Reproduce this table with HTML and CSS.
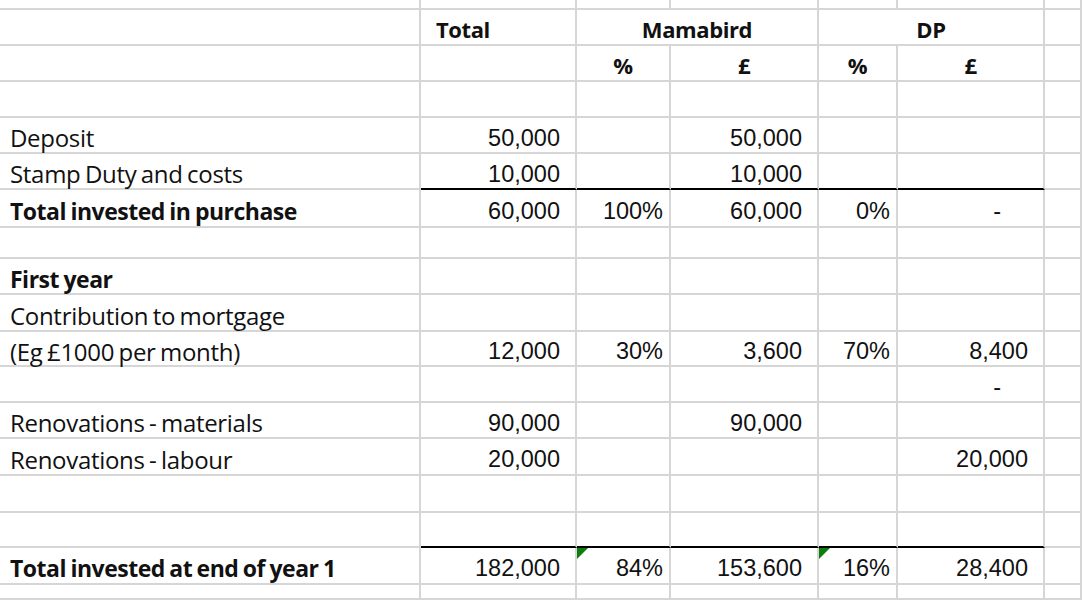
FILE: index.html
```html
<!DOCTYPE html>
<html lang="en">
<head>
<meta charset="utf-8">
<title>Investment split</title>
<link rel="stylesheet" href="styles.css">
</head>
<body>
<div class="sheet">
  <div class="row h10"><div class="c"></div><div class="c"></div><div class="c"></div><div class="c"></div><div class="c"></div><div class="c"></div><div class="c"></div></div>
  <div class="row h36">
    <div class="c"></div>
    <div class="c hd left">Total</div>
    <div class="c hd ctr span2">Mamabird</div>
    <div class="c hd ctr span2">DP</div>
    <div class="c"></div>
  </div>
  <div class="row h36">
    <div class="c"></div><div class="c"></div>
    <div class="c hd ctr">%</div><div class="c hd ctr">£</div>
    <div class="c hd ctr">%</div><div class="c hd ctr">£</div>
    <div class="c"></div>
  </div>
  <div class="row h36"><div class="c"></div><div class="c"></div><div class="c"></div><div class="c"></div><div class="c"></div><div class="c"></div><div class="c"></div></div>
  <div class="row h36">
    <div class="c lbl">Deposit</div>
    <div class="c num">50,000</div><div class="c"></div><div class="c num">50,000</div><div class="c"></div><div class="c"></div>
    <div class="c"></div>
  </div>
  <div class="row h36">
    <div class="c lbl">Stamp Duty and costs</div>
    <div class="c num ul">10,000</div><div class="c ul"></div><div class="c num ul">10,000</div><div class="c ul"></div><div class="c ul"></div>
    <div class="c"></div>
  </div>
  <div class="row h38">
    <div class="c lbl b">Total invested in purchase</div>
    <div class="c num">60,000</div><div class="c pct">100%</div><div class="c num">60,000</div><div class="c pct">0%</div><div class="c num dash">-</div>
    <div class="c"></div>
  </div>
  <div class="row h31"><div class="c"></div><div class="c"></div><div class="c"></div><div class="c"></div><div class="c"></div><div class="c"></div><div class="c"></div></div>
  <div class="row h36">
    <div class="c lbl b">First year</div>
    <div class="c"></div><div class="c"></div><div class="c"></div><div class="c"></div><div class="c"></div><div class="c"></div>
  </div>
  <div class="row h37">
    <div class="c lbl">Contribution to mortgage</div>
    <div class="c"></div><div class="c"></div><div class="c"></div><div class="c"></div><div class="c"></div><div class="c"></div>
  </div>
  <div class="row h35">
    <div class="c lbl">(Eg £1000 per month)</div>
    <div class="c num">12,000</div><div class="c pct">30%</div><div class="c num">3,600</div><div class="c pct">70%</div><div class="c num">8,400</div>
    <div class="c"></div>
  </div>
  <div class="row h36">
    <div class="c"></div><div class="c"></div><div class="c"></div><div class="c"></div><div class="c"></div><div class="c num dash">-</div>
    <div class="c"></div>
  </div>
  <div class="row h36">
    <div class="c lbl">Renovations - materials</div>
    <div class="c num">90,000</div><div class="c"></div><div class="c num">90,000</div><div class="c"></div><div class="c"></div>
    <div class="c"></div>
  </div>
  <div class="row h37">
    <div class="c lbl">Renovations - labour</div>
    <div class="c num">20,000</div><div class="c"></div><div class="c"></div><div class="c"></div><div class="c num">20,000</div>
    <div class="c"></div>
  </div>
  <div class="row h37"><div class="c"></div><div class="c"></div><div class="c"></div><div class="c"></div><div class="c"></div><div class="c"></div><div class="c"></div></div>
  <div class="row h35"><div class="c"></div><div class="c ul"></div><div class="c ul"></div><div class="c ul"></div><div class="c ul"></div><div class="c ul"></div><div class="c"></div></div>
  <div class="row h37">
    <div class="c lbl b">Total invested at end of year 1</div>
    <div class="c num">182,000</div><div class="c pct flag">84%</div><div class="c num">153,600</div><div class="c pct flag">16%</div><div class="c num">28,400</div>
    <div class="c"></div>
  </div>
  <div class="row h15"><div class="c"></div><div class="c"></div><div class="c"></div><div class="c"></div><div class="c"></div><div class="c"></div><div class="c"></div></div>
</div>
</body>
</html>
```
FILE: styles.css
```css
* { box-sizing: border-box; }
html, body { margin: 0; padding: 0; background: #fff; }
body { width: 1082px; height: 600px; overflow: hidden; }

.sheet {
  display: flex;
  flex-direction: column;
  font-family: "Liberation Sans", Arial, sans-serif;
  font-size: 23.5px;
  color: #111;
  line-height: 1;
}

.row {
  display: grid;
  grid-template-columns: 421px 156px 94px 148px 79px 147px 1fr;
}
.h10 { height: 10px; }
.h15 { height: 15px; }
.h31 { height: 31px; }
.h35 { height: 35px; }
.h36 { height: 36px; }
.h37 { height: 37px; }
.h38 { height: 38px; }

.c {
  position: relative;
  display: flex;
  align-items: center;
  padding-top: 3px;
  border-right: 2px solid #d6d6d6;
  border-bottom: 2px solid #d6d6d6;
  white-space: nowrap;
}
.span2 { grid-column: span 2; }

.ul { border-bottom-color: #000; }

.lbl {
  padding-left: 10px;
  padding-top: 6px;
  font-family: "Open Sans", "Noto Sans", sans-serif;
  font-size: 24px;
  letter-spacing: -0.3px;
  word-spacing: -1.5px;
}
.lbl.b {
  font-weight: 700;
  font-size: 23px;
  letter-spacing: -0.5px;
  word-spacing: -1px;
}

.hd {
  font-family: "Open Sans", "Noto Sans", sans-serif;
  font-weight: 700;
  font-size: 22px;
  letter-spacing: -0.4px;
}
.left { padding-left: 15px; }
.ctr { justify-content: center; }

.num, .pct { justify-content: flex-end; padding-top: 7px; }
.num { padding-right: 15px; }
.pct { padding-right: 6px; }
.dash { padding-right: 42px; }

.flag::before {
  content: "";
  position: absolute;
  top: 0;
  left: 0;
  border-style: solid;
  border-width: 11px 11px 0 0;
  border-color: #0e7d0e transparent transparent transparent;
}
```
